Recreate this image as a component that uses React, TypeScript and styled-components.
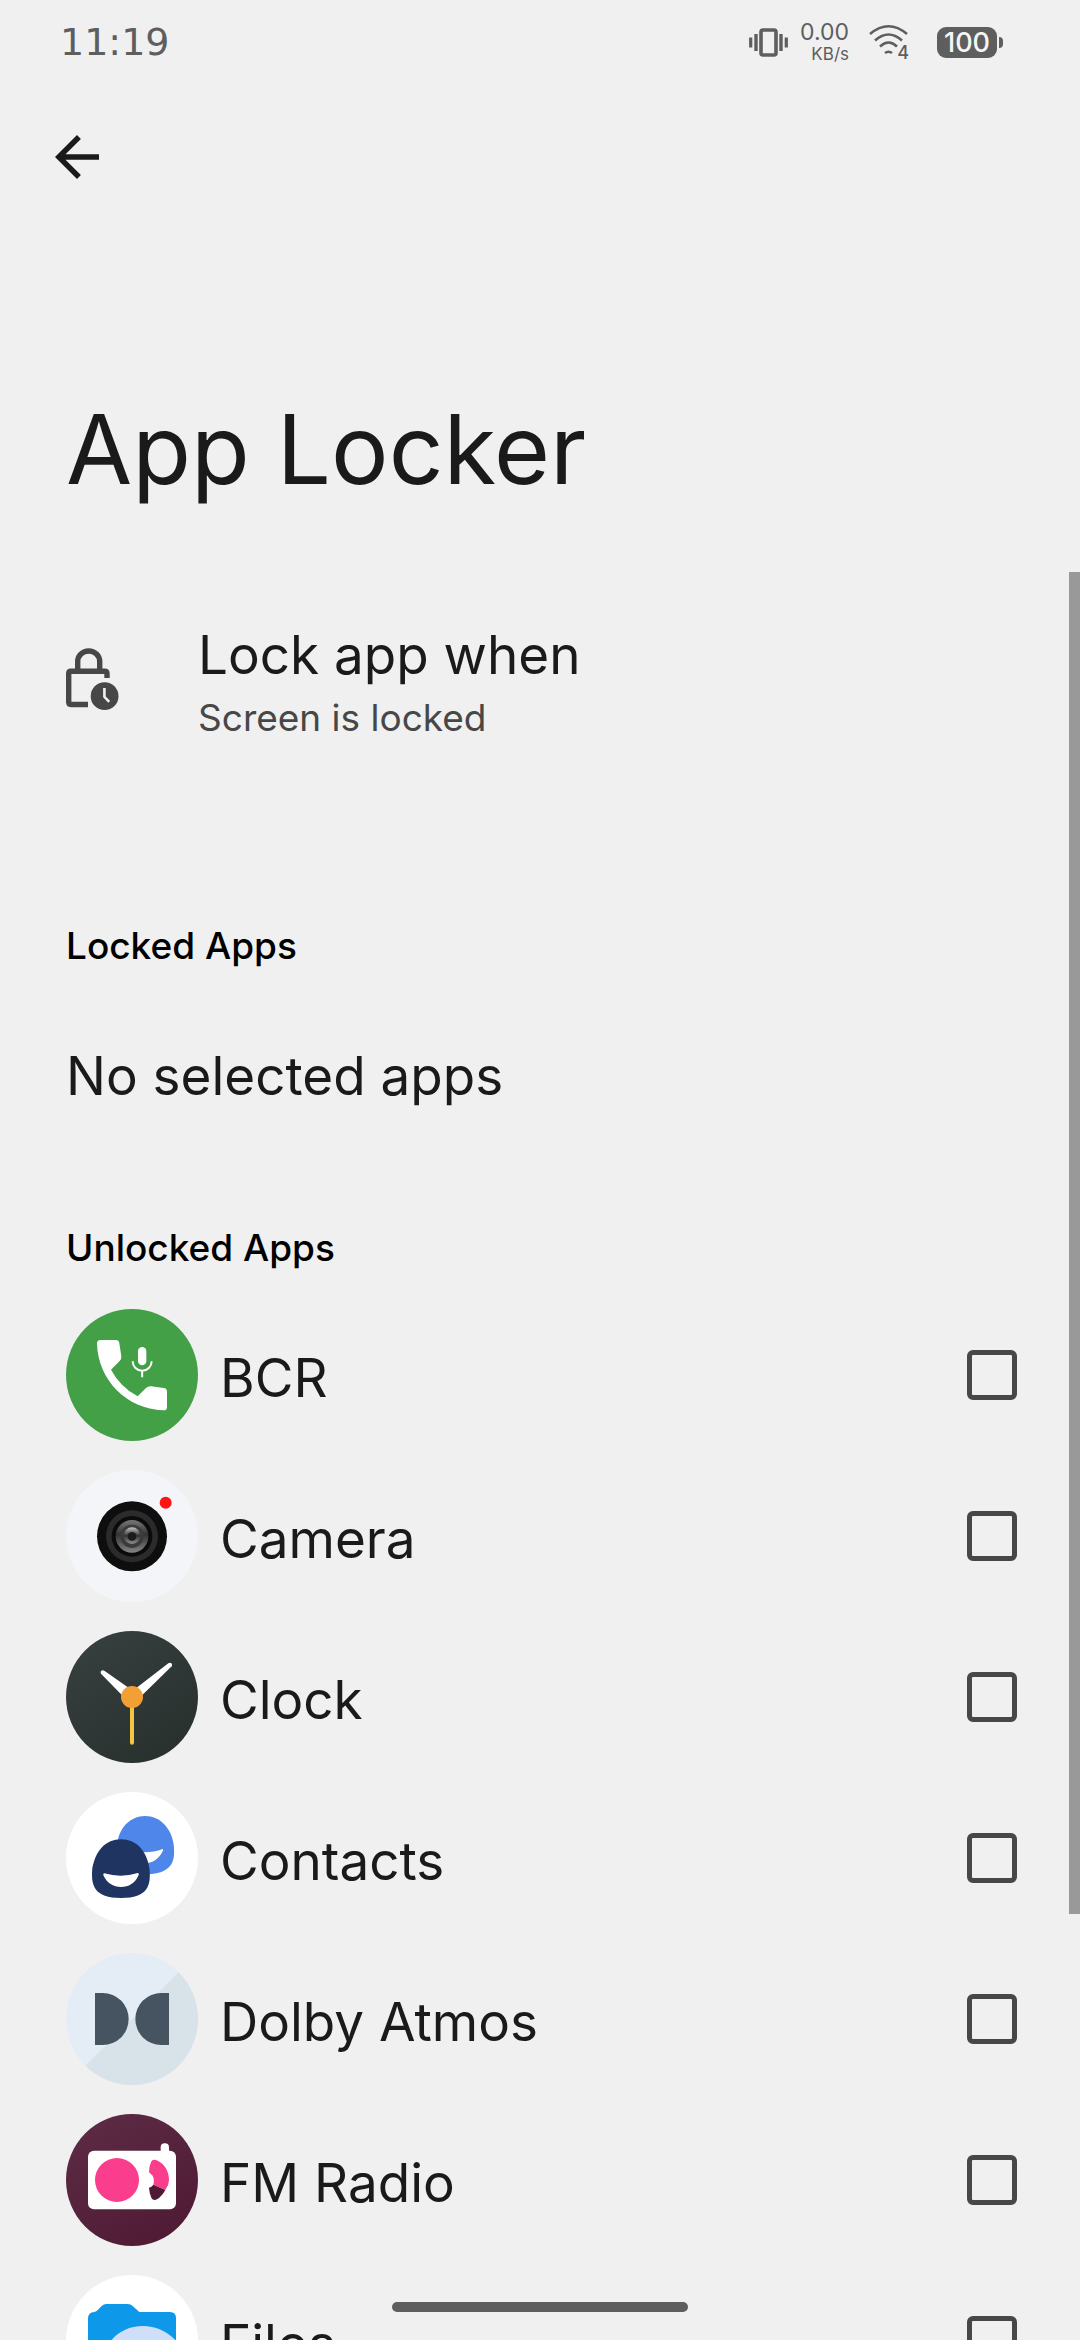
import React from "react";
import styled, { createGlobalStyle } from "styled-components";

const GlobalStyle = createGlobalStyle`
  * { box-sizing: border-box; }
  body {
    margin: 0;
    background: #f0f0f0;
    color: #1a1a1a;
    font-family: Inter, Roboto, sans-serif;
  }
`;

const Screen = styled.div`
  position: relative;
  display: flex;
  flex-direction: column;
  height: 100vh;
  overflow: hidden;
`;

const StatusBar = styled.header`
  display: flex;
  flex: none;
  align-items: center;
  height: 84px;
  padding: 0 77px 0 60px;
  color: #5e5e5e;
`;

const Time = styled.time`
  margin-right: auto;
  font: 38px/44px "DejaVu Sans", sans-serif;
`;

const NetSpeed = styled.div`
  display: flex;
  flex-direction: column;
  align-items: flex-end;
  margin: 0 20px 0 12px;
  font-size: 23px;
  line-height: 24px;
`;

const SpeedUnit = styled.span`
  font-size: 17px;
  line-height: 20px;
`;

const Wifi = styled.div`
  position: relative;
  display: flex;
`;

const WifiBadge = styled.span`
  position: absolute;
  right: 0;
  bottom: 0;
  font-size: 18px;
  line-height: 14px;
  font-weight: 500;
`;

const Battery = styled.div`
  display: flex;
  align-items: center;
  gap: 2px;
  margin-left: 28px;
`;

const BatteryBody = styled.span`
  width: 60px;
  border-radius: 9px;
  background: #5e5e5e;
  color: #f6f6f6;
  font-size: 27px;
  line-height: 31px;
  font-weight: 500;
  text-align: center;
`;

const BatteryTip = styled.span`
  width: 4px;
  height: 11px;
  border-radius: 0 4px 4px 0;
  background: #5e5e5e;
`;

const AppBar = styled.nav`
  display: flex;
  flex: none;
  align-items: center;
  height: 146px;
  padding: 0 44px;
`;

const BackButton = styled.button`
  display: flex;
  padding: 0;
  border: 0;
  background: none;
  color: #1a1a1a;
`;

const Content = styled.main`
  flex: 1;
  min-height: 0;
  overflow: hidden;
  padding: 161px 63px 0 66px;
`;

const PageTitle = styled.h1`
  margin: 0 0 116px;
  font-size: 96px;
  line-height: 116px;
  font-weight: 400;
`;

const Preference = styled.button`
  display: flex;
  align-items: center;
  gap: 78px;
  width: 100%;
  margin-bottom: 184px;
  padding: 0;
  border: 0;
  background: none;
  color: #474747;
  font-family: inherit;
  text-align: left;
`;

const PreferenceText = styled.span`
  display: flex;
  flex-direction: column;
  gap: 9px;
`;

const ItemText = styled.span`
  color: #1a1a1a;
  font-size: 53px;
  line-height: 64px;
`;

const Summary = styled.span`
  font-size: 37px;
  line-height: 44px;
`;

const SectionTitle = styled.h2`
  margin: 0;
  color: #000;
  font-size: 37px;
  line-height: 44px;
  font-weight: 500;
`;

const EmptyNote = styled.p`
  display: flex;
  margin: 76px 0 118px;
`;

const AppList = styled.ul`
  margin: 25px 0 0;
  padding: 0;
  list-style: none;
`;

const AppRow = styled.label`
  display: flex;
  align-items: center;
  gap: 22px;
  padding: 14px 0 15px;
`;

const AppIcon = styled.svg`
  flex: none;
  width: 132px;
  height: 132px;
  border-radius: 50%;
`;

const AppName = styled(ItemText)`
  flex: 1;
  padding-top: 6px;
`;

const Checkbox = styled.input`
  appearance: none;
  flex: none;
  width: 50px;
  height: 50px;
  margin: 0;
  border: 5px solid #474747;
  border-radius: 6px;

  &:checked {
    background: #474747;
  }
`;

const ScrollThumb = styled.div`
  position: absolute;
  top: 572px;
  right: 0;
  width: 11px;
  height: 1342px;
  background: #999;
`;

const HomeHandle = styled.div`
  position: absolute;
  bottom: 28px;
  left: 50%;
  width: 296px;
  height: 10px;
  margin-left: -148px;
  border-radius: 5px;
  background: #5e5e5e;
`;

const VibrateIcon = () => (
  <svg width="39" height="29" viewBox="0 0 39 29" fill="none" stroke="currentColor" aria-hidden="true">
    <rect x="12" y="2" width="15" height="25" rx="2" strokeWidth="3.6" />
    <path d="M7 6v17M32 6v17" strokeWidth="3.4" />
    <path d="M1.7 9.5v10M37.3 9.5v10" strokeWidth="3.2" />
  </svg>
);

const WifiIcon = () => (
  <svg width="40" height="36" viewBox="0 0 40 36" fill="none" stroke="currentColor" strokeWidth="2.6" aria-hidden="true">
    <path d="M1 10Q19.5-5.5 38 10" />
    <path d="M6 16.5Q19.5 4.5 33 16.5" />
    <path d="M11 22.5Q19.5 14.5 28 22.5" />
    <path d="M16 29Q19.5 26.5 23 29" />
  </svg>
);

const BackIcon = () => (
  <svg width="66" height="66" viewBox="0 0 24 24" fill="currentColor" aria-hidden="true">
    <path d="M20 11H7.83l5.59-5.59L12 4l-8 8 8 8 1.41-1.41L7.83 13H20z" />
  </svg>
);

const LockClockIcon = () => (
  <svg width="54" height="68" viewBox="0 0 54 68" fill="none" stroke="currentColor" strokeWidth="5.4" aria-hidden="true">
    <path d="M11.7 23V13.5a11 10.5 0 0 1 22 0V23" />
    <path d="M41 30V25.5q0-2.2-2.2-2.2H4.9q-2.2 0-2.2 2.2V54q0 2.5 2.2 2.5H22" />
    <circle cx="38.600" cy="48.2" r="13.9" fill="currentColor" stroke="none" />
    <path d="M38.4 40v8.8l4.8 5" stroke="#f0f0f0" strokeWidth="2.6" />
  </svg>
);

const BcrIcon = () => (
  <AppIcon viewBox="48 56 396 396" aria-hidden="true">
    <rect x="48" y="56" width="396" height="396" fill="#43a047" />
    <path
      fill="#fff"
      d="M152 149H197Q207 149 208 159L214 198Q215 206 209 212L183 238Q211 290 263 318L288 293Q295 287 303 288L341 293Q351 294 351 304V349Q351 361 340 360C230 356 145 270 141 161Q140 149 152 149Z"
    />
    <rect x="264" y="170" width="25" height="55" rx="12.5" fill="#fff" />
    <path d="M248 213a28.5 28.5 0 0 0 57 0M276.5 242v19" fill="none" stroke="#fff" strokeWidth="6" />
  </AppIcon>
);

const CameraIcon = () => (
  <AppIcon viewBox="48 539 396 396" aria-hidden="true">
    <defs>
      <linearGradient id="lensRing" x1="0" y1="0" x2="0" y2="1">
        <stop offset="0" stopColor="#777" />
        <stop offset="0.45" stopColor="#333" />
        <stop offset="1" stopColor="#858585" />
      </linearGradient>
      <linearGradient id="lensGlass" x1="0" y1="0" x2="0" y2="1">
        <stop offset="0" stopColor="#c4c4c4" />
        <stop offset="0.5" stopColor="#333" />
        <stop offset="1" stopColor="#909090" />
      </linearGradient>
    </defs>
    <rect x="48" y="539" width="396" height="396" fill="#f3f5f8" />
    <circle cx="246" cy="738" r="105" fill="#0e0e0e" />
    <circle cx="246" cy="738" r="78" fill="#2b2b2b" />
    <circle cx="246" cy="738" r="61" fill="#0b0b0b" />
    <circle cx="246" cy="738" r="49" fill="url(#lensRing)" />
    <circle cx="246" cy="738" r="35" fill="#3b3b3b" />
    <circle cx="246" cy="736" r="25" fill="url(#lensGlass)" />
    <circle cx="246" cy="738" r="13" fill="#1c1c1c" />
    <circle cx="347" cy="637" r="18" fill="#fb1616" />
  </AppIcon>
);

const ClockIcon = () => (
  <AppIcon viewBox="48 63 396 396" aria-hidden="true">
    <defs>
      <linearGradient id="clockFace" x1="0" y1="0" x2="0.7" y2="1">
        <stop offset="0" stopColor="#37413f" />
        <stop offset="1" stopColor="#29312f" />
      </linearGradient>
    </defs>
    <rect x="48" y="63" width="396" height="396" fill="url(#clockFace)" />
    <path fill="#fff" d="M153 191Q150 186 154 182.5T163 182L240 236 222 262Z" />
    <path fill="#fff" d="M365 169Q368 164 364.5 160.5T355 160L256 236 274 258Z" />
    <path d="M246 290v108" stroke="#f4c445" strokeWidth="12" strokeLinecap="round" />
    <circle cx="246" cy="261" r="33" fill="#f2a036" />
  </AppIcon>
);

const ContactsIcon = () => (
  <AppIcon viewBox="48 546 396 396" aria-hidden="true">
    <rect x="48" y="546" width="396" height="396" fill="#fff" />
    <path
      fill="#4f86e9"
      d="M285 618C331 618 364 655 371 704C376 750 370 786 298 793C240 788 202 775 201 706C205 655 240 618 285 618Z"
    />
    <path fill="#fff" d="M265 726Q305 730 338 717Q341 718 338 724C325 750 305 760 285 760Z" />
    <path
      fill="#1f3460"
      d="M213 688C259 688 289 722 298 774C304 826 294 864 213 864C132 864 122 826 127 774C137 722 167 688 213 688Z"
    />
    <path fill="#fff" d="M163 790Q213 805 263 789Q268 789 266 795C255 820 236 831 213 831S171 820 160 796Q159 790 163 790Z" />
  </AppIcon>
);

const DolbyIcon = () => (
  <AppIcon viewBox="48 69 396 396" aria-hidden="true">
    <rect x="48" y="69" width="396" height="396" fill="#e4edf5" />
    <path d="M444 68V465H48L108 406 386 127Z" fill="#d8e3e9" />
    <path d="M135 189H158a78 78 0 0 1 0 156H135Z" fill="#465361" />
    <path d="M357 189H334a78 78 0 0 0 0 156H357Z" fill="#465361" />
  </AppIcon>
);

const RadioIcon = () => (
  <AppIcon viewBox="48 552 396 396" aria-hidden="true">
    <defs>
      <linearGradient id="radioBack" x1="0" y1="0" x2="0.6" y2="1">
        <stop offset="0" stopColor="#5e2c46" />
        <stop offset="1" stopColor="#501c35" />
      </linearGradient>
    </defs>
    <rect x="48" y="552" width="396" height="396" fill="url(#radioBack)" />
    <rect x="332" y="640" width="25" height="50" rx="12" fill="#fff" />
    <rect x="114" y="662" width="264" height="176" rx="18" fill="#fff" />
    <circle cx="201" cy="750" r="66" fill="#fb3d8d" />
    <path
      fill="#fb3d8d"
      d="M303 696Q307 687 318 690C344 700 357 724 357 750Q357 765 346 780L310 764Q314 748 308 737L297 727Q297 710 303 696Z"
    />
    <path fill="#4f1b34" d="M310 764L346 780Q336 799 321 808Q309 813 304 803Q298 789 297 773Q305 771 310 764Z" />
  </AppIcon>
);

const FilesIcon = () => (
  <AppIcon viewBox="48 1035 396 396" aria-hidden="true">
    <rect x="48" y="1035" width="396" height="396" fill="#fff" />
    <path
      fill="#0d98e9"
      d="M114 1166Q114 1147 133 1146Q139 1145 144 1139L155 1128Q161 1122 169 1122H233Q242 1122 248 1128L268 1146H360Q378 1146 378 1164V1345H114Z"
    />
    <path fill="#cfdff9" d="M148 1345C148 1250 200 1188 279 1188Q335 1188 378 1232V1345Z" />
  </AppIcon>
);

const apps = [
  { name: "BCR", Icon: BcrIcon },
  { name: "Camera", Icon: CameraIcon },
  { name: "Clock", Icon: ClockIcon },
  { name: "Contacts", Icon: ContactsIcon },
  { name: "Dolby Atmos", Icon: DolbyIcon },
  { name: "FM Radio", Icon: RadioIcon },
  { name: "Files", Icon: FilesIcon },
];

export default function App() {
  return (
    <Screen>
      <GlobalStyle />
      <StatusBar>
        <Time>11:19</Time>
        <VibrateIcon />
        <NetSpeed>
          <span>0.00</span>
          <SpeedUnit>KB/s</SpeedUnit>
        </NetSpeed>
        <Wifi>
          <WifiIcon />
          <WifiBadge>4</WifiBadge>
        </Wifi>
        <Battery>
          <BatteryBody>100</BatteryBody>
          <BatteryTip />
        </Battery>
      </StatusBar>
      <AppBar>
        <BackButton type="button" aria-label="Back">
          <BackIcon />
        </BackButton>
      </AppBar>
      <Content>
        <PageTitle>App Locker</PageTitle>
        <Preference type="button">
          <LockClockIcon />
          <PreferenceText>
            <ItemText>Lock app when</ItemText>
            <Summary>Screen is locked</Summary>
          </PreferenceText>
        </Preference>
        <SectionTitle>Locked Apps</SectionTitle>
        <EmptyNote>
          <ItemText>No selected apps</ItemText>
        </EmptyNote>
        <SectionTitle>Unlocked Apps</SectionTitle>
        <AppList>
          {apps.map(({ name, Icon }) => (
            <li key={name}>
              <AppRow>
                <Icon />
                <AppName>{name}</AppName>
                <Checkbox type="checkbox" />
              </AppRow>
            </li>
          ))}
        </AppList>
      </Content>
      <ScrollThumb />
      <HomeHandle />
    </Screen>
  );
}
